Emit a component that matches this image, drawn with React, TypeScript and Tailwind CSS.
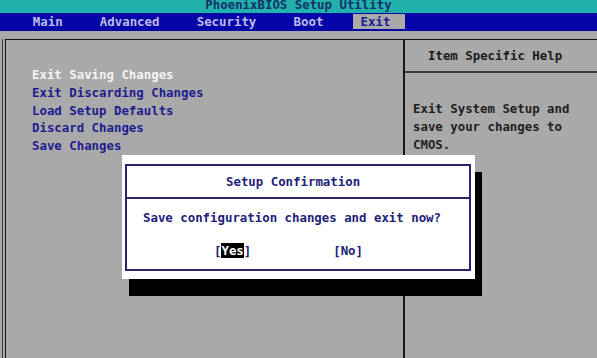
const mono = "font-['DejaVu_Sans_Mono','Liberation_Mono',monospace] font-bold text-[12.39px] leading-[17.75px]"

const exitItems = [
  'Exit Saving Changes',
  'Exit Discarding Changes',
  'Load Setup Defaults',
  'Discard Changes',
  'Save Changes',
]

export default function App() {
  return (
    <div className={`relative w-[597px] h-[358px] overflow-hidden bg-[#a9a9a9] ${mono}`}>
      {/* Title bar, top half is cut off */}
      <div className="h-[13px] overflow-hidden bg-[#20b2aa]">
        <div className="-mt-[4px] text-center text-[#16306a]">PhoenixBIOS Setup Utility</div>
      </div>

      {/* Menu bar */}
      <div className="h-[18px] bg-[#0606a8] pl-[3px] whitespace-pre text-[#bcbce8]">
        <span>{'    Main     Advanced     Security     Boot    '}</span>
        <span className="bg-[#a9a9a9] text-[#1a1a92]">{' Exit  '}</span>
      </div>

      {/* Main panel */}
      <div className="mt-[8px] ml-[2px] pl-[2px] border-l border-[#3a3a3a]">
        <div className="flex h-[320px] border-t border-l border-[#151515]">
          <div className="w-[397px] pt-[26px] pl-[26px]">
            {exitItems.map((item, i) => (
              <div key={item} className={i === 0 ? 'text-[#f4f4f4]' : 'text-[#1c1c8e]'}>
                {item}
              </div>
            ))}
          </div>

          <div className="flex-1 border-l-2 border-[#151515]">
            <div className="h-[33px] border-b-2 border-[#3a3a3a] pl-[23px] flex items-center text-[#1a1a1a]">
              Item Specific Help
            </div>
            <div className="pt-[27px] pl-[8px] text-[#1e1e1e]">
              <div>Exit System Setup and</div>
              <div>save your changes to</div>
              <div>CMOS.</div>
            </div>
          </div>
        </div>
      </div>

      {/* Confirmation dialog */}
      <div className="absolute left-[122px] top-[155px] w-[353px] h-[124px] bg-white shadow-[7px_17px_0_#000] pt-[9px] pl-[3px] pr-[4px] pb-[8px]">
        <div className="h-full border-2 border-[#26266a] text-[#1c2278]">
          <div className="h-[33px] border-b-2 border-[#26266a] pl-[99px] flex items-center">
            Setup Confirmation
          </div>
          <div className="pt-[10px] pl-[16px]">Save configuration changes and exit now?</div>
          <div className="pt-[15px] pl-[87px] whitespace-pre">
            <span>[</span>
            <span className="bg-black text-white">Yes</span>
            <span>]</span>
            <span>{'           [No]'}</span>
          </div>
        </div>
      </div>
    </div>
  )
}
